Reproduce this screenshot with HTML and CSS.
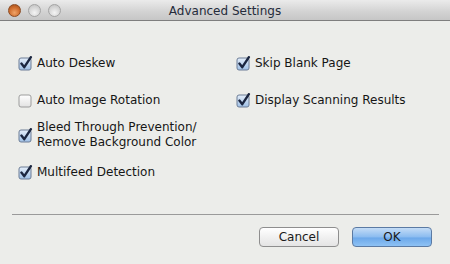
FILE: index.html
```html
<!DOCTYPE html>
<html lang="en">
<head>
    <meta charset="UTF-8">
    <title>Advanced Settings</title>
    <link rel="stylesheet" href="styles.css">
</head>
<body>
    <!-- checkbox glyphs, reused below -->
    <svg class="defs" width="0" height="0">
        <defs>
            <linearGradient id="on-fill" x1="0" y1="0" x2="0" y2="1">
                <stop offset="0" stop-color="#e4eefa"/>
                <stop offset="1" stop-color="#9fc0e6"/>
            </linearGradient>
            <linearGradient id="off-fill" x1="0" y1="0" x2="0" y2="1">
                <stop offset="0" stop-color="#ffffff"/>
                <stop offset="1" stop-color="#e2e2e2"/>
            </linearGradient>
            <symbol id="box-on" viewBox="0 0 15 15">
                <rect x="1" y="2" width="12" height="12" rx="2" fill="url(#on-fill)" stroke="#6c7d96"/>
                <path d="M3.4 7.6 L6.3 11.2 L12.9 1.2" fill="none" stroke="#1b2640" stroke-width="2.4" stroke-linecap="round" stroke-linejoin="round"/>
            </symbol>
            <symbol id="box-off" viewBox="0 0 15 15">
                <rect x="1" y="2" width="12" height="12" rx="2" fill="url(#off-fill)" stroke="#9c9c9c"/>
            </symbol>
        </defs>
    </svg>

    <div class="dialog">
        <div class="titlebar">
            <div class="lights">
                <span class="light close"></span>
                <span class="light"></span>
                <span class="light"></span>
            </div>
            <div class="title">Advanced Settings</div>
        </div>

        <div class="options">
            <div class="col">
                <label class="opt row1"><svg class="box"><use href="#box-on"/></svg><span>Auto Deskew</span></label>
                <label class="opt row2"><svg class="box"><use href="#box-off"/></svg><span>Auto Image Rotation</span></label>
                <label class="opt row3"><svg class="box"><use href="#box-on"/></svg><span>Bleed Through Prevention/<br>Remove Background Color</span></label>
                <label class="opt row4"><svg class="box"><use href="#box-on"/></svg><span>Multifeed Detection</span></label>
            </div>
            <div class="col">
                <label class="opt row1"><svg class="box"><use href="#box-on"/></svg><span>Skip Blank Page</span></label>
                <label class="opt row2"><svg class="box"><use href="#box-on"/></svg><span>Display Scanning Results</span></label>
            </div>
        </div>

        <div class="footer">
            <button class="btn" type="button">Cancel</button>
            <button class="btn default" type="button">OK</button>
        </div>
    </div>
</body>
</html>
```

FILE: styles.css
```css
html, body {
    margin: 0;
    padding: 0;
}
body {
    width: 450px;
    height: 264px;
    overflow: hidden;
    background: #ecedea;
    font-family: "DejaVu Sans", "Liberation Sans", sans-serif;
    font-size: 12px;
    color: #161616;
}
.defs {
    position: absolute;
}

.dialog {
    height: 264px;
    display: flex;
    flex-direction: column;
}

/* Title bar */
.titlebar {
    height: 20px;
    border-bottom: 1px solid #7e7e7e;
    background: linear-gradient(#ebebeb, #d2d2d2 60%, #c6c6c6);
    display: flex;
    align-items: center;
    position: relative;
}
.lights {
    display: flex;
    gap: 7px;
    padding-left: 8px;
    padding-top: 1px;
}
.light {
    width: 13px;
    height: 13px;
    border-radius: 50%;
    box-sizing: border-box;
    border: 1px solid #a4a4a4;
    background: radial-gradient(circle at 50% 70%, #f4f4f4, #d6d6d6 55%, #bdbdbd);
}
.light.close {
    border-color: #8c4b22;
    background: radial-gradient(circle at 50% 70%, #f0a468, #cf6d2e 55%, #9c4a1a);
}
.title {
    position: absolute;
    left: 0;
    right: 0;
    text-align: center;
    color: #252b3a;
    top: 4px;
}

/* Check options */
.options {
    display: grid;
    grid-template-columns: 218px 1fr;
    padding-left: 18px;
    height: 193px;
}
.col {
    display: flex;
    flex-direction: column;
}
.opt {
    display: flex;
    align-items: center;
    gap: 4px;
    line-height: 15px;
}
.box {
    width: 15px;
    height: 15px;
    flex: none;
}
.row1 { margin-top: 35px; }
.row2 { margin-top: 22px; }
.row3 { margin-top: 12px; }
.row4 { margin-top: 15px; }

/* Footer */
.footer {
    margin: 0 11px 0 12px;
    border-top: 1px solid #9a9a9a;
    display: flex;
    justify-content: flex-end;
    gap: 13px;
    padding: 12px 7px 0 0;
}
.btn {
    width: 80px;
    height: 20px;
    border-radius: 4px;
    border: 1px solid #8e8e8e;
    background: linear-gradient(#ffffff, #f1f1f1 50%, #e4e4e4);
    font-family: "DejaVu Sans", "Liberation Sans", sans-serif;
    font-size: 12px;
    color: #1a1a1a;
    padding: 0;
}
.btn.default {
    border-color: #5b7aa3;
    background: linear-gradient(#c4dcf6, #8bbcf0 50%, #6ca8ea 55%, #8ec2f4);
}
```
